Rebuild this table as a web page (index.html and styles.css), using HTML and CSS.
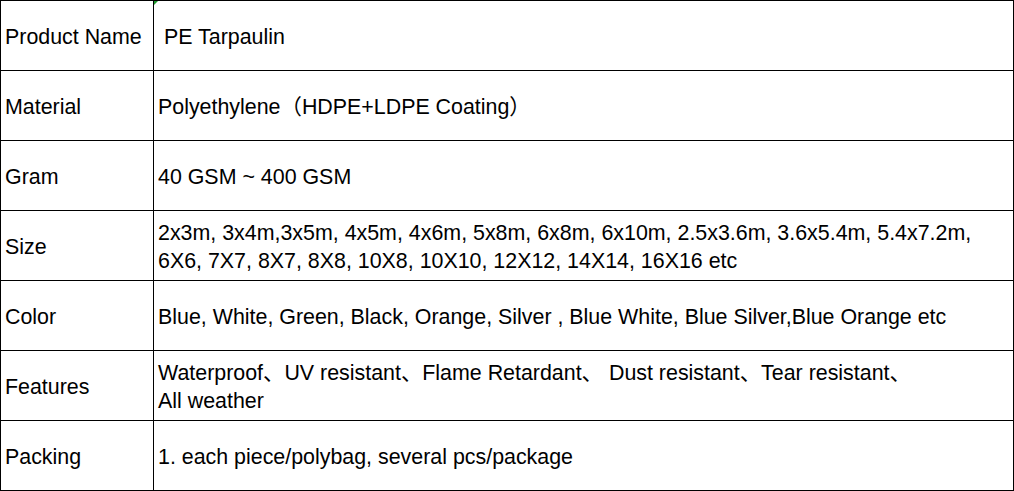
FILE: index.html
```html
<!DOCTYPE html>
<html>
<head>
<meta charset="utf-8">
<link rel="stylesheet" href="styles.css">
</head>
<body>
<div class="spec">
  <div class="cell label">Product Name</div>
  <div class="cell value flagged"><span class="lead">&nbsp;</span>PE Tarpaulin</div>
  <div class="cell label">Material</div>
  <div class="cell value">Polyethylene（HDPE+LDPE Coating）</div>
  <div class="cell label">Gram</div>
  <div class="cell value">40 GSM ~ 400 GSM</div>
  <div class="cell label">Size</div>
  <div class="cell value">2x3m, 3x4m,3x5m, 4x5m, 4x6m, 5x8m, 6x8m, 6x10m, 2.5x3.6m, 3.6x5.4m, 5.4x7.2m,<br>6X6, 7X7, 8X7, 8X8, 10X8, 10X10, 12X12, 14X14, 16X16 etc</div>
  <div class="cell label">Color</div>
  <div class="cell value">Blue, White, Green, Black, Orange, Silver , Blue White, Blue Silver,Blue Orange etc</div>
  <div class="cell label">Features</div>
  <div class="cell value">Waterproof、UV resistant、Flame Retardant、 Dust resistant、Tear resistant、<br>All weather</div>
  <div class="cell label">Packing</div>
  <div class="cell value">1. each piece/polybag, several pcs/package</div>
</div>
</body>
</html>
```

FILE: styles.css
```css
html, body {
  margin: 0;
  padding: 0;
  background: #ffffff;
}

.spec {
  display: grid;
  grid-template-columns: 153px 860px;
  grid-auto-rows: 70px;
  width: 1014px;
  box-sizing: border-box;
  border-top: 1px solid #000;
  border-left: 1px solid #000;
  font-family: "Liberation Sans", Arial, "Noto Sans CJK SC", sans-serif;
  font-size: 21.4px;
  line-height: 28px;
  color: #000;
}

.cell {
  box-sizing: border-box;
  border-right: 1px solid #000;
  border-bottom: 1px solid #000;
  display: flex;
  flex-direction: column;
  justify-content: center;
  white-space: nowrap;
  padding-top: 2px;
}

.cell.label {
  padding-left: 4px;
}

.cell.value {
  padding-left: 4px;
  display: block;
  align-content: center;
}

.flagged {
  position: relative;
}

.flagged::before {
  content: "";
  position: absolute;
  left: 0;
  top: 0;
  width: 0;
  height: 0;
  border-top: 4px solid #1e9a2e;
  border-right: 4px solid transparent;
}
```
